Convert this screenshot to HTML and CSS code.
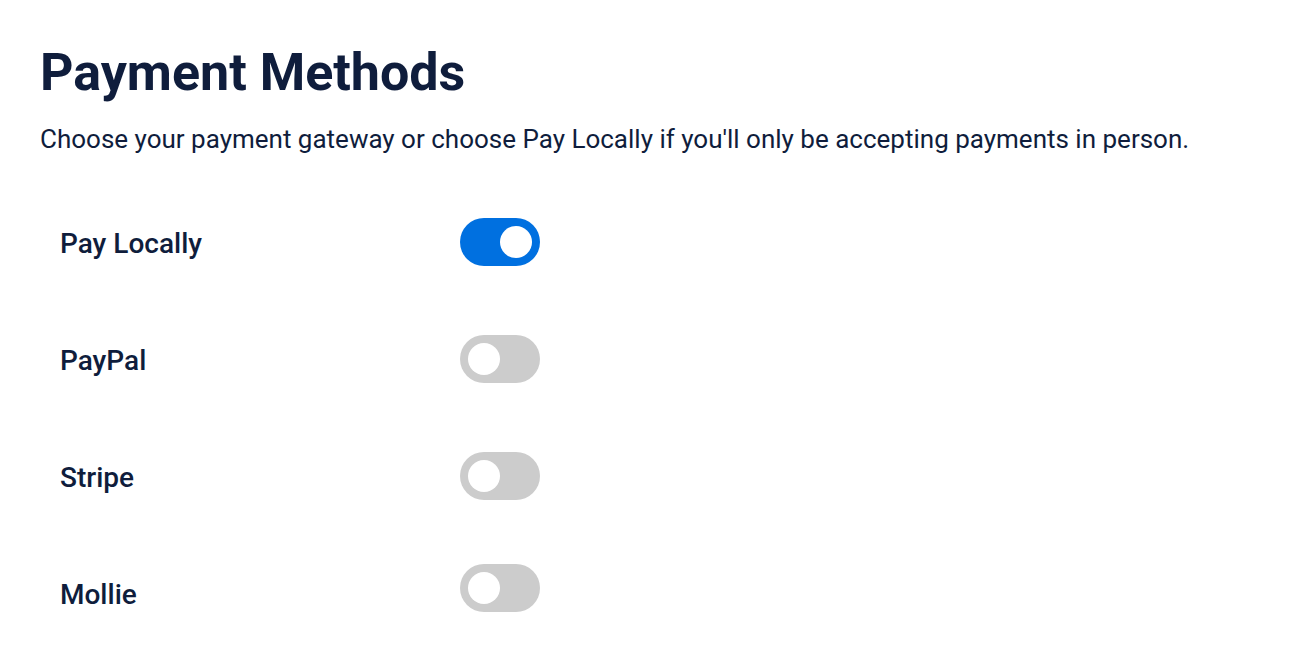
FILE: index.html
```html
<!DOCTYPE html>
<html lang="en">
<head>
  <meta charset="UTF-8" />
  <meta name="viewport" content="width=device-width, initial-scale=1.0" />
  <title>Payment Methods</title>
  <link rel="stylesheet" href="styles.css">
</head>
<body>
  <div class="content">
    <h1>Payment Methods</h1>
    <p class="intro">Choose your payment gateway or choose Pay Locally if you'll only be accepting payments in person.</p>

    <!-- Список способов оплаты -->
    <div class="methods">
      <div class="method">
        <span class="method-name">Pay Locally</span>
        <button class="toggle on" onclick="flip(this)"><span class="knob"></span></button>
      </div>
      <div class="method">
        <span class="method-name">PayPal</span>
        <button class="toggle" onclick="flip(this)"><span class="knob"></span></button>
      </div>
      <div class="method">
        <span class="method-name">Stripe</span>
        <button class="toggle" onclick="flip(this)"><span class="knob"></span></button>
      </div>
      <div class="method">
        <span class="method-name">Mollie</span>
        <button class="toggle" onclick="flip(this)"><span class="knob"></span></button>
      </div>
    </div>
  </div>

  <script>
    // Переключатель вкл/выкл
    function flip(btn) {
      btn.classList.toggle('on');
    }
  </script>
</body>
</html>
```

FILE: styles.css
```css
:root {
  --text-color: #0f1d3c;
  --accent: #0070e0;
  --off: #cccccc;
}
* {
  box-sizing: border-box;
}
body {
  margin: 0;
  font-family: Roboto, 'Noto Sans', sans-serif;
  background: #fff;
  color: var(--text-color);
}
.content {
  padding: 40px 40px 0;
}
h1 {
  margin: 0;
  font-size: 52px;
  font-weight: 700;
  line-height: 66px;
}
.intro {
  margin: 15px 0 0;
  font-size: 26px;
  line-height: 36px;
}
/* Строки со способами оплаты */
.methods {
  margin-top: 26px;
  padding-left: 20px;
}
.method {
  display: flex;
  align-items: center;
  height: 117px;
}
.method-name {
  width: 400px;
  padding-top: 3px;
  font-size: 28px;
  font-weight: 500;
}
.toggle {
  position: relative;
  width: 80px;
  height: 48px;
  padding: 0;
  border: none;
  border-radius: 24px;
  background: var(--off);
  cursor: pointer;
}
.method:last-child .toggle {
  margin-bottom: 10px;
}
.knob {
  position: absolute;
  top: 8px;
  left: 8px;
  width: 32px;
  height: 32px;
  border-radius: 50%;
  background: #fff;
  transition: left 0.2s;
}
.toggle.on {
  background: var(--accent);
}
.toggle.on .knob {
  left: 40px;
}
```
